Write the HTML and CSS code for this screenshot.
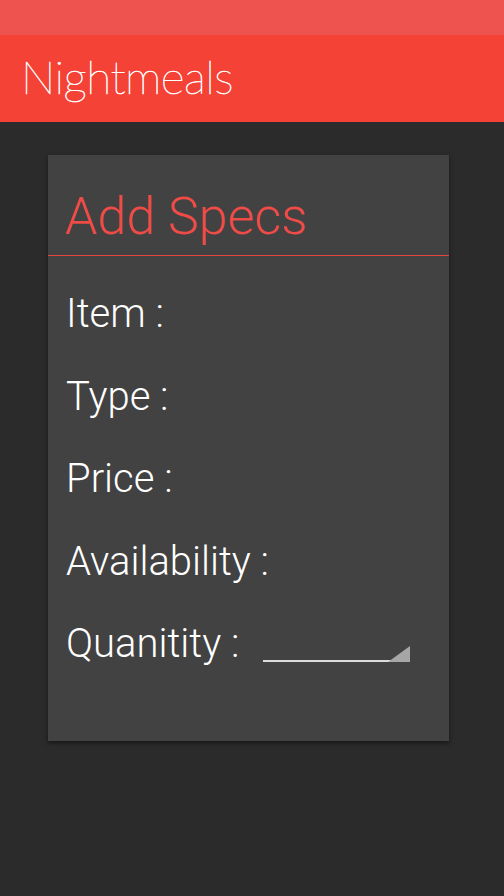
FILE: index.html
```html
<!DOCTYPE html>
<html>
<head>
<meta charset="utf-8">
<link rel="stylesheet" href="styles.css">
</head>
<body>
<div class="status"></div>
<header class="appbar"><span class="brand">Nightmeals</span></header>
<main class="content">
  <section class="card">
    <h1 class="card-title">Add Specs</h1>
    <div class="divider"></div>
    <div class="rows">
      <div class="row">Item :</div>
      <div class="row">Type :</div>
      <div class="row">Price :</div>
      <div class="row">Availability :</div>
      <div class="row qty">Quanitity :
        <span class="spinner"><span class="arrow"></span></span>
      </div>
    </div>
  </section>
</main>
</body>
</html>
```
FILE: styles.css
```css
html, body { margin: 0; padding: 0; }
body {
  width: 504px; height: 896px; overflow: hidden;
  background: #2c2b2c;
  font-family: Roboto, "Liberation Sans", sans-serif;
}
.status { height: 35px; background: #ef5350; }
.appbar {
  height: 87px; background: #f44336;
  display: flex; align-items: center;
  padding-left: 21px;
}
.brand {
  font-family: Lato, sans-serif; font-weight: 100;
  color: #fff; font-size: 46px; letter-spacing: -0.5px;
  -webkit-text-stroke: 0.6px #fff;
  margin-top: -4px;
}
.content { padding: 33px 55px 0 48px; }
.card {
  background: #424242; height: 586px;
  box-shadow: 0 2px 4px rgba(0,0,0,0.5);
}
.card-title {
  margin: 0; font-weight: 300; color: #ef4b47;
  font-size: 52px; line-height: 76px;
  padding: 24px 0 0 17px;
}
.divider { height: 1px; background: #e2443e; }
.rows { padding: 27px 0 0 18px; }
.row {
  color: #fff; font-weight: 300; font-size: 40px;
  height: 82.5px; line-height: 62px;
  display: flex; align-items: baseline;
}
.spinner {
  position: relative; display: inline-block;
  width: 147px; height: 2px; background: #dcdcdc;
  margin-left: 24px;
  top: 5px;
}
.arrow {
  position: absolute; right: 0; bottom: 0;
  width: 0; height: 0;
  border-left: 22px solid transparent;
  border-bottom: 16px solid #a6a6a6;
}
```
